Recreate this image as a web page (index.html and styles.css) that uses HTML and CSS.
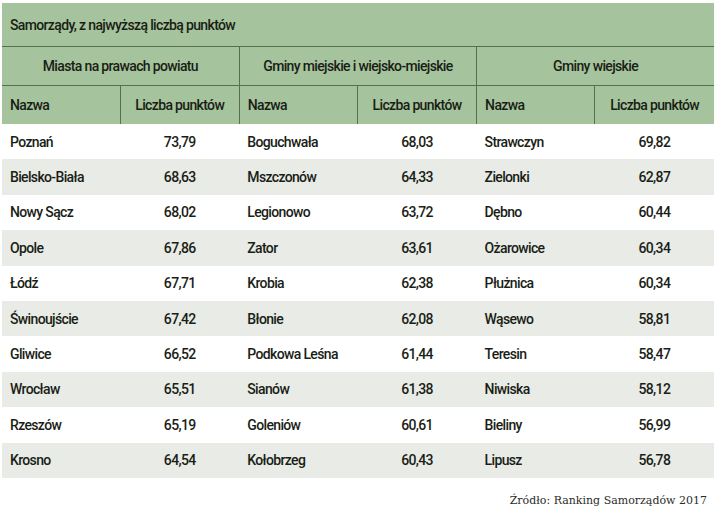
FILE: index.html
```html
<!DOCTYPE html>
<html lang="pl">
<head>
<meta charset="utf-8">
<title>Samorządy</title>
<link rel="stylesheet" href="styles.css">
</head>
<body>
<div class="wrap">
<table class="ranking">
  <colgroup>
    <col class="c-name"><col class="c-pts"><col class="c-name"><col class="c-pts"><col class="c-name"><col class="c-pts">
  </colgroup>
  <thead>
    <tr class="title-row"><th colspan="6">Samorządy, z najwyższą liczbą punktów</th></tr>
    <tr class="group-row">
      <th colspan="2">Miasta na prawach powiatu</th>
      <th colspan="2">Gminy miejskie i wiejsko-miejskie</th>
      <th colspan="2">Gminy wiejskie</th>
    </tr>
    <tr class="col-row">
      <th class="name">Nazwa</th><th class="pts">Liczba punktów</th>
      <th class="name">Nazwa</th><th class="pts">Liczba punktów</th>
      <th class="name">Nazwa</th><th class="pts">Liczba punktów</th>
    </tr>
  </thead>
  <tbody>
    <tr><td>Poznań</td><td class="pts">73,79</td><td>Boguchwała</td><td class="pts">68,03</td><td>Strawczyn</td><td class="pts">69,82</td></tr>
    <tr><td>Bielsko-Biała</td><td class="pts">68,63</td><td>Mszczonów</td><td class="pts">64,33</td><td>Zielonki</td><td class="pts">62,87</td></tr>
    <tr><td>Nowy Sącz</td><td class="pts">68,02</td><td>Legionowo</td><td class="pts">63,72</td><td>Dębno</td><td class="pts">60,44</td></tr>
    <tr><td>Opole</td><td class="pts">67,86</td><td>Zator</td><td class="pts">63,61</td><td>Ożarowice</td><td class="pts">60,34</td></tr>
    <tr><td>Łódź</td><td class="pts">67,71</td><td>Krobia</td><td class="pts">62,38</td><td>Płużnica</td><td class="pts">60,34</td></tr>
    <tr><td>Świnoujście</td><td class="pts">67,42</td><td>Błonie</td><td class="pts">62,08</td><td>Wąsewo</td><td class="pts">58,81</td></tr>
    <tr><td>Gliwice</td><td class="pts">66,52</td><td>Podkowa Leśna</td><td class="pts">61,44</td><td>Teresin</td><td class="pts">58,47</td></tr>
    <tr><td>Wrocław</td><td class="pts">65,51</td><td>Sianów</td><td class="pts">61,38</td><td>Niwiska</td><td class="pts">58,12</td></tr>
    <tr><td>Rzeszów</td><td class="pts">65,19</td><td>Goleniów</td><td class="pts">60,61</td><td>Bieliny</td><td class="pts">56,99</td></tr>
    <tr><td>Krosno</td><td class="pts">64,54</td><td>Kołobrzeg</td><td class="pts">60,43</td><td>Lipusz</td><td class="pts">56,78</td></tr>
  </tbody>
</table>
<p class="source">Źródło: Ranking Samorządów 2017</p>
</div>
</body>
</html>
```

FILE: styles.css
```css
html, body {
  margin: 0;
  padding: 0;
  background: #ffffff;
}
.wrap {
  padding: 3px 6px 0 2px;
}
.ranking {
  width: 712px;
  border-collapse: collapse;
  table-layout: fixed;
  font-family: Roboto, sans-serif;
  font-size: 14px;
  font-weight: 500;
  letter-spacing: -0.65px;
  color: #1a1e16;
}
.c-name { width: 118px; }
.c-pts { width: 119px; }
.ranking th {
  background: #a5c39c;
  font-weight: 500;
  padding: 0;
}
.title-row th {
  height: 43px;
  text-align: left;
  padding-left: 8px;
  border-bottom: 1px solid #55704c;
}
.group-row th {
  height: 38px;
  text-align: center;
  border-bottom: 1px solid #55704c;
  border-left: 1px solid #55704c;
}
.group-row th:first-child { border-left: none; }
.col-row th {
  height: 38px;
  border-left: 1px solid #55704c;
}
.col-row th:first-child { border-left: none; }
.col-row th.name {
  text-align: left;
  padding-left: 8px;
}
.col-row th.pts { text-align: center; }
.ranking td {
  height: 35.4px;
  padding: 0 0 0 8px;
}
.ranking td.pts {
  text-align: center;
  padding: 0;
}
.ranking tbody tr:nth-child(even) td {
  background: #e8ebe6;
}
.source {
  margin: 16px 7px 0 0;
  text-align: right;
  font-family: "DejaVu Serif", serif;
  font-size: 11px;
  color: #2a2d28;
}
```
